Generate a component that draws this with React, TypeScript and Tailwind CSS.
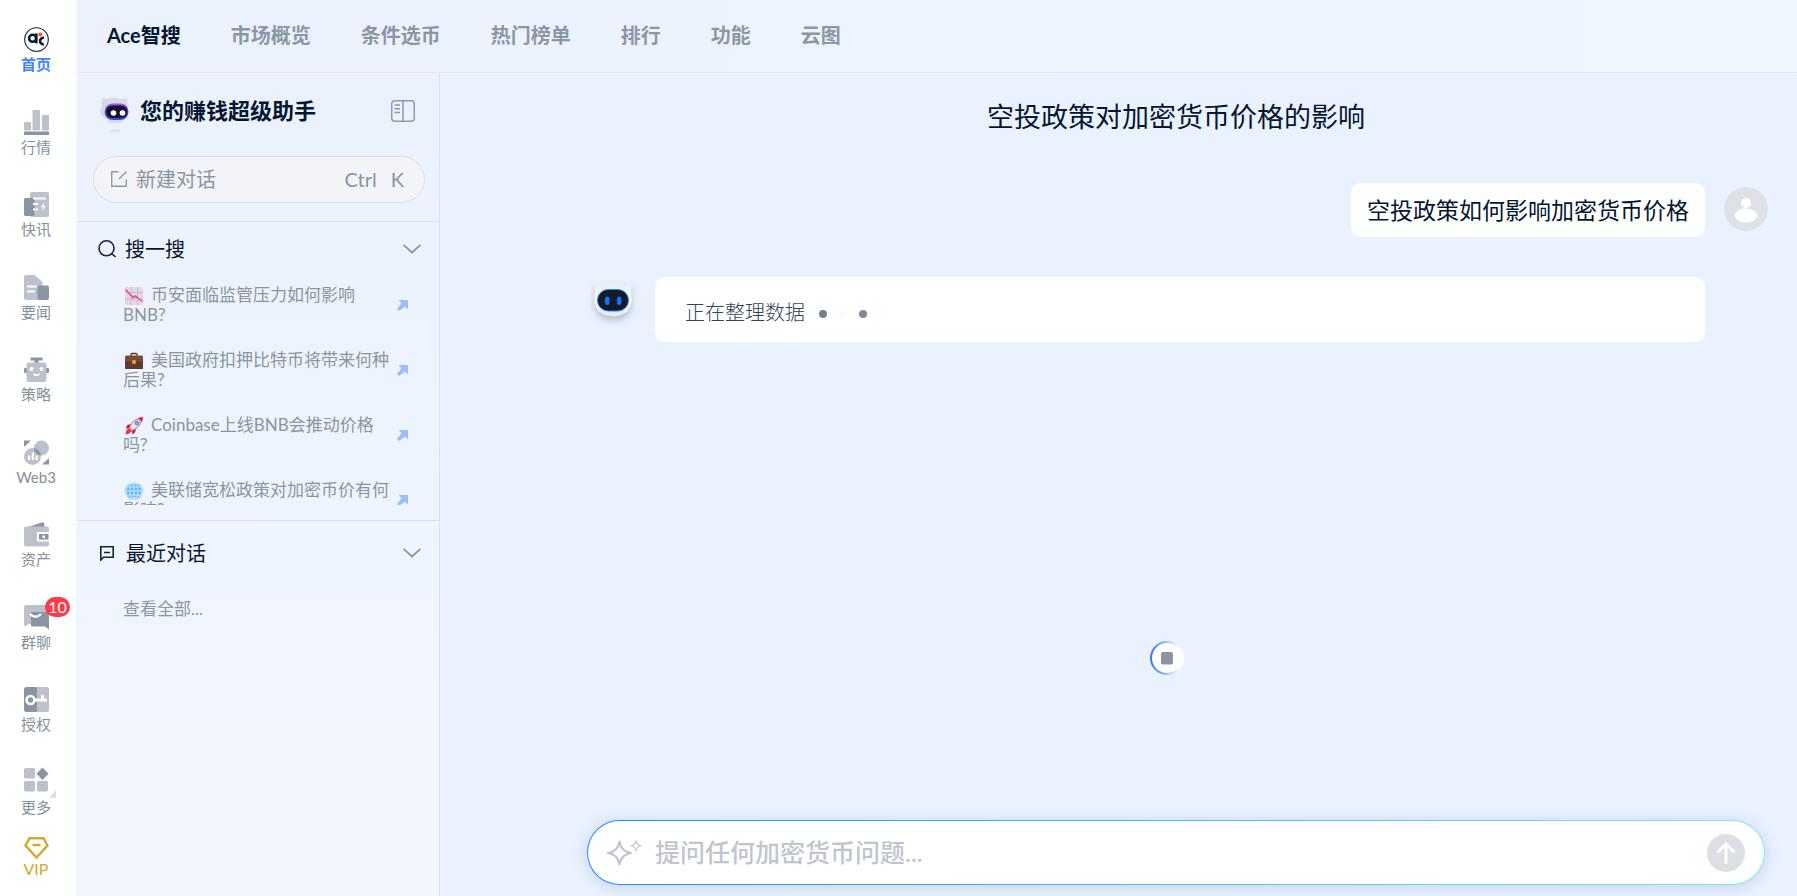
import React, { useState } from "react";

const LIGHT = "#bcc1cb";
const DARK = "#8a95a3";

const sideItems = [
  { label: "首页", icon: <LogoIcon />, active: true },
  {
    label: "行情",
    icon: (
      <SideSvg>
        <rect x="0" y="12" width="7" height="8.5" rx="1" fill={LIGHT} />
        <rect x="8.5" y="0" width="7.5" height="20.5" rx="1" fill={LIGHT} />
        <rect x="18" y="5" width="7" height="15.5" rx="1" fill={LIGHT} />
        <rect x="0" y="21.5" width="25" height="3.5" rx="0.5" fill={DARK} />
      </SideSvg>
    ),
  },
  {
    label: "快讯",
    icon: (
      <SideSvg>
        <rect x="6" y="0" width="19" height="25" rx="2" fill={LIGHT} />
        <rect x="0" y="6" width="10.5" height="18" rx="1.5" fill={DARK} />
        <path d="M9 6.5h13M9 12h5M9 17.5h5" stroke="#fff" strokeWidth="2" />
        <path d="M20.5 10.5L16.5 15.200h2.700L18 18.800l4-4.800h-2.700z" fill="#fff" />
      </SideSvg>
    ),
  },
  {
    label: "要闻",
    icon: (
      <SideSvg>
        <path d="M2 0h8.5L18.5 7v18H2a2 2 0 0 1-2-2V2a2 2 0 0 1 2-2z" fill={LIGHT} />
        <path d="M3 11.5h10M3 16.5h8" stroke="#fff" strokeWidth="2" />
        <rect x="13.5" y="10.5" width="11.5" height="14.5" rx="2" fill={DARK} />
      </SideSvg>
    ),
  },
  {
    label: "策略",
    icon: (
      <SideSvg>
        <path d="M6.5 0.5h12v3h-4V7h-4V3.5h-4z" fill={DARK} />
        <rect x="0" y="11" width="4" height="5" rx="1" fill={DARK} />
        <rect x="21" y="11" width="4" height="5" rx="1" fill={DARK} />
        <rect x="2.5" y="5.5" width="20" height="19.5" rx="2" fill={LIGHT} />
        <circle cx="7.5" cy="12" r="2" fill="#fff" />
        <circle cx="17.5" cy="12" r="2" fill="#fff" />
        <path d="M9.5 17q3 2.5 6 0" stroke="#fff" strokeWidth="1.8" fill="none" />
      </SideSvg>
    ),
  },
  {
    label: "Web3",
    icon: (
      <SideSvg>
        <path d="M0 0.5h7L0 7z" fill={DARK} />
        <path d="M25 18v6.5h-7z" fill={DARK} />
        <circle cx="17.5" cy="8" r="7.5" fill={LIGHT} />
        <circle cx="8.5" cy="16.5" r="8.5" fill={LIGHT} />
        <path d="M10 8.1a8.5 8.5 0 0 1 6.9 7.3A7.5 7.5 0 0 1 10 8.1z" fill={DARK} />
        <path d="M5 15.5V20M8.8 12.5V20M12.5 15.5V20" stroke="#fff" strokeWidth="2.2" />
      </SideSvg>
    ),
  },
  {
    label: "资产",
    icon: (
      <SideSvg>
        <path d="M4 5L19.5 0L21 5z" fill={DARK} />
        <rect x="0" y="4.5" width="25" height="20" rx="2" fill={LIGHT} />
        <rect x="13" y="10" width="12" height="9.5" fill="#fff" />
        <rect x="15" y="12" width="9.500" height="5.5" fill={DARK} />
        <rect x="18.5" y="13.5" width="2.5" height="2.5" fill="#fff" />
      </SideSvg>
    ),
  },
  {
    label: "群聊",
    badge: 10,
    icon: (
      <SideSvg>
        <path d="M2 0h21a2 2 0 0 1 2 2v17H5l-4 2.5L0 20V2a2 2 0 0 1 2-2z" fill={LIGHT} />
        <path d="M8 7h15.5L25 8v16.500l-4-3H8a1 1 0 0 1-1-1V8a1 1 0 0 1 1-1z" fill={DARK} />
        <path d="M6 9q5.5 5.500 11 0" stroke="#fff" strokeWidth="2.4" fill="none" />
      </SideSvg>
    ),
  },
  {
    label: "授权",
    icon: (
      <SideSvg>
        <path d="M2.5 0H13.5v25h-11A2.5 2.5 0 0 1 0 22.5v-20A2.5 2.5 0 0 1 2.5 0z" fill={DARK} />
        <path d="M13.5 0h9A2.5 2.5 0 0 1 25 2.5v20a2.5 2.5 0 0 1-2.5 2.5h-9z" fill={LIGHT} />
        <circle cx="6.5" cy="13" r="4" fill="none" stroke="#fff" strokeWidth="2.5" />
        <path d="M10.5 13H23M18.5 8v5" stroke="#fff" strokeWidth="2.8" />
      </SideSvg>
    ),
  },
  {
    label: "更多",
    more: true,
    icon: (
      <svg width="25" height="25" viewBox="0 2 25 25" overflow="visible" aria-hidden="true">
        <rect x="0" y="0" width="11" height="10.5" rx="1.5" fill={LIGHT} />
        <rect x="0" y="13" width="11" height="10.5" rx="1.5" fill={LIGHT} />
        <rect x="13" y="13" width="11" height="10.5" rx="1.5" fill={LIGHT} />
        <path d="M18.5 -0.5l6 6.200-6 6.200-6-6.200z" fill={DARK} />
      </svg>
    ),
  },
];

const topNav = ["Ace智搜", "市场概览", "条件选币", "热门榜单", "排行", "功能", "云图"];

const suggestions = [
  { icon: <ChartEmoji />, text: "币安面临监管压力如何影响BNB?" },
  { icon: <BriefcaseEmoji />, text: "美国政府扣押比特币将带来何种后果?" },
  { icon: <RocketEmoji />, text: "Coinbase上线BNB会推动价格吗?" },
  { icon: <GlobeEmoji />, text: "美联储宽松政策对加密币价有何影响?" },
];

function SideSvg({ children }: { children: React.ReactNode }) {
  return (
    <svg width="25" height="25" viewBox="0 0 25 25" aria-hidden="true">
      {children}
    </svg>
  );
}

function LogoIcon() {
  return (
    <SideSvg>
      <circle cx="12.5" cy="12.5" r="11.8" fill="#fff" stroke="#0f2440" strokeWidth="1.100" />
      <circle cx="8.600" cy="11.300" r="3.5" fill="none" stroke="#0a1b36" strokeWidth="2.6" />
      <rect x="11" y="6.5" width="2.600" height="9.800" fill="#0a1b36" />
      <path d="M20 10.800a3.500 3.500 0 0 0-4 3.300 3.300 3.300 0 0 0 3.800 3.200" fill="none" stroke="#0a1b36" strokeWidth="2.600" />
      <circle cx="16.300" cy="7.600" r="2" fill="#f4512c" />
    </SideSvg>
  );
}

function EmojiSvg({ children }: { children: React.ReactNode }) {
  return (
    <svg
      width="18"
      height="18"
      viewBox="0 0 18 18"
      className="ml-[2px] mr-2 inline-block align-[-4px]"
      aria-hidden="true"
    >
      {children}
    </svg>
  );
}

function ChartEmoji() {
  return (
    <EmojiSvg>
      <rect width="18" height="18" rx="2" fill="#e4d6ea" />
      <path d="M0 5.5h18M0 12h18M6 0v18M12.5 0v18" stroke="#c9b8d6" />
      <path d="M0.5 2.5l7.5 8 2.5-1.5L14 12l3.5 2.5" fill="none" stroke="#f0476c" strokeWidth="1.5" />
    </EmojiSvg>
  );
}

function BriefcaseEmoji() {
  return (
    <EmojiSvg>
      <path d="M6 4V2.5Q6 1.5 7 1.5h4q1 0 1 1V4" fill="none" stroke="#5a3a33" strokeWidth="1.3" />
      <rect x="0" y="3.5" width="18" height="13.5" rx="1.5" fill="#7a4a38" />
      <path d="M0 9.5h18V15.5a1.5 1.5 0 0 1-1.5 1.5h-15A1.5 1.5 0 0 1 0 15.5z" fill="#5f3a31" />
      <rect x="7.2" y="8" width="3.6" height="4" rx="1" fill="#f09a2a" />
    </EmojiSvg>
  );
}

function RocketEmoji() {
  return (
    <EmojiSvg>
      <path d="M6 7L2.5 8 0.5 11.5l4-.5zM11 12l-1 3.5L7 17.5l.3-4z" fill="#c2185b" />
      <path d="M4.5 10.5C6.5 5 10.5 1.5 16.5 1.5c0 6-4 10-9.5 12z" fill="#e9e3ee" stroke="#c64b78" strokeWidth="0.8" />
      <path d="M13 1.2Q15.5 0 18 0q0 2.5-1.2 5z" fill="#d81b50" />
      <circle cx="12" cy="6" r="2" fill="#5fb3e8" stroke="#6b7785" strokeWidth="0.7" />
      <path d="M4 11q-3 1-3.5 6.5Q5 17 7 14z" fill="#f5333f" />
    </EmojiSvg>
  );
}

function GlobeEmoji() {
  return (
    <EmojiSvg>
      <circle cx="9" cy="9" r="8.8" fill="#62b8fb" />
      <g fill="none" stroke="#d5eeff" strokeWidth="0.9">
        <circle cx="9" cy="9" r="8" />
        <ellipse cx="9" cy="9" rx="4" ry="8" />
        <path d="M9 1v16M1 9h16M2.3 5h13.4M2.3 13h13.4" />
      </g>
    </EmojiSvg>
  );
}

function HelperBot() {
  return (
    <svg width="29" height="36" viewBox="0 0 29 36" className="mt-2" aria-hidden="true">
      <defs>
        <linearGradient id="visor" x1="0" y1="0" x2="0" y2="1">
          <stop offset="0" stopColor="#b44be0" />
          <stop offset="1" stopColor="#2f4df5" />
        </linearGradient>
      </defs>
      <ellipse cx="15" cy="33.5" rx="5.5" ry="1.5" fill="#dde4ee" />
      <path d="M2 1l5 1q7-2.5 14 0l6-1 .5 8q2 7-1 10-4 4-12 4T2 19q-3-5-.5-10z" fill="#d6dce6" />
      <path d="M8 23h15l-1 3H9z" fill="#d8dce3" />
      <rect x="4.5" y="6.5" width="24" height="16.5" rx="8" fill="url(#visor)" />
      <rect x="6" y="8.5" width="21.5" height="12.5" rx="6.2" fill="#10152b" />
      <circle cx="13.5" cy="16" r="2.8" fill="#fff" />
      <circle cx="22.5" cy="16" r="2.8" fill="#fff" />
    </svg>
  );
}

function BotAvatar() {
  return (
    <svg width="40" height="46" viewBox="0 0 40 46" overflow="visible" className="shrink-0" aria-hidden="true">
      <defs>
        <linearGradient id="head" x1="0" y1="0" x2="0" y2="1">
          <stop offset="0" stopColor="#e6eff4" />
          <stop offset="0.5" stopColor="#f7fafd" />
          <stop offset="1" stopColor="#e2eaf4" />
        </linearGradient>
        <filter id="headShadow" x="-30%" y="-30%" width="160%" height="180%">
          <feDropShadow dx="0" dy="4" stdDeviation="3.5" floodColor="#7d8796" floodOpacity="0.5" />
        </filter>
      </defs>
      <path
        d="M2 1l6 1.5q12-3 24 0l6-1.500v10q1 9-.5 13-3 8-11.500 9.500l-6 1-6-1Q5.500 32 2.500 24q-2-5-.5-13z"
        fill="url(#head)"
        filter="url(#headShadow)"
      />
      <rect x="4.500" y="7.500" width="31" height="21.5" rx="10.7" fill="#151a28" stroke="#2b86f5" strokeWidth="1" />
      <rect x="12" y="14.500" width="4.5" height="8.5" rx="2.2" fill="#0c74ff" />
      <rect x="24" y="14.500" width="4.5" height="8.5" rx="2.2" fill="#0c74ff" />
    </svg>
  );
}

function Chevron() {
  return (
    <svg width="18" height="10" viewBox="0 0 18 10" fill="none" aria-hidden="true">
      <path d="M0.5 0.8L9 8.5l8.5-7.7" stroke="#8a93a3" strokeWidth="1.8" />
    </svg>
  );
}

function SideBar() {
  return (
    <nav className="flex w-[76px] shrink-0 flex-col bg-white pr-1">
      <ul className="flex flex-1 flex-col justify-between pt-[23px]">
        {sideItems.map((item) => (
          <li key={item.label}>
            <a href="#" className="relative flex flex-col items-center pt-1">
              {item.icon}
              <span
                className={`text-[15px] leading-6 ${
                  item.active ? "font-bold text-[#4286f5]" : "text-[#858f9b]"
                }`}
              >
                {item.label}
              </span>
              {item.badge && (
                <span className="absolute -top-1 left-[45px] h-5 w-[25px] rounded-full bg-[#fd3a46] text-center text-base leading-5 text-white">
                  {item.badge}
                </span>
              )}
              {item.more && (
                <svg width="7" height="8" viewBox="0 0 7 8" className="absolute right-4 top-6" aria-hidden="true">
                  <path d="M7 0v8H0z" fill="#dde0e6" />
                </svg>
              )}
            </a>
          </li>
        ))}
      </ul>
      <a href="#" className="flex h-[77px] flex-col items-center pt-[18px] text-[#d3a82c]">
        <svg width="25" height="22" viewBox="0 0 25 22" fill="none" stroke="currentColor" strokeWidth="2.4" aria-hidden="true">
          <path d="M5.5 1.2h14l4 7.3-11 12-11-12z" />
          <path d="M8.5 8h8" />
        </svg>
        <span className="text-base leading-5">VIP</span>
      </a>
    </nav>
  );
}

function TopNav() {
  return (
    <header className="flex h-[73px] shrink-0 items-center border-b border-[#e4e8ee] bg-linear-to-r from-[#ebf2fe] to-[#f0f6ff] pb-[2px] pl-[29px]">
      <ul className="flex gap-[50px] text-xl font-bold">
        {topNav.map((name, i) => (
          <li key={name}>
            <a href="#" className={i === 0 ? "text-[#031632]" : "text-[#8c97a5]"}>
              {name}
            </a>
          </li>
        ))}
      </ul>
    </header>
  );
}

function AssistantPanel() {
  const [searchOpen, setSearchOpen] = useState(true);
  const [recentOpen, setRecentOpen] = useState(true);

  return (
    <aside className="flex w-[362px] shrink-0 flex-col border-r border-[#dce1e9] bg-linear-to-b from-[#ebf2fe] to-[#f2f7ff]">
      <div className="border-b border-[#dce1e9] pb-[18px] pl-[15px] pr-[14px] pt-5">
        <div className="flex h-9 items-center pl-[7px] pr-[10px]">
          <HelperBot />
          <h1 className="ml-[11px] flex-1 text-[22px] font-bold leading-9 text-[#031632]">
            您的赚钱超级助手
          </h1>
          <button aria-label="收起侧栏">
            <svg width="24" height="22" viewBox="0 0 24 22" fill="none" stroke="#8f99a8" strokeWidth="1.5" aria-hidden="true">
              <rect x="0.7" y="0.7" width="22.6" height="20.6" rx="3" />
              <path d="M12 1v20M3.5 5h5.5M3.5 8.8h5.5M3.5 12.6h5.5" />
            </svg>
          </button>
        </div>
        <button className="mt-[27px] flex h-[47px] w-full items-center rounded-full border border-[#dadee4] bg-[#f2f4f8] pb-[2px] pl-[17px] pr-5 text-xl text-[#8a94a2]">
          <svg width="16" height="16" viewBox="0 0 16 16" fill="none" stroke="#8f99a8" strokeWidth="1.4" aria-hidden="true">
            <path d="M7.5 0.7H0.7v14.6h14.6V8.5M8 8l7.5-7.5" />
          </svg>
          <span className="ml-[9px] flex-1 text-left">新建对话</span>
          <kbd className="font-[inherit]">Ctrl</kbd>
          <kbd className="ml-[14px] font-[inherit]">K</kbd>
        </button>
      </div>

      <section className="border-b border-[#dce1e9] pb-[15px]">
        <button
          className="flex h-[54px] w-full items-center pl-[20px] pr-[18px] text-xl text-[#031632]"
          onClick={() => setSearchOpen(!searchOpen)}
        >
          <svg width="18" height="18" viewBox="0 0 18 18" fill="none" stroke="#0f2440" strokeWidth="1.6" aria-hidden="true">
            <circle cx="8.5" cy="8.3" r="7.5" />
            <path d="M13.5 13.5l4 3.5" />
          </svg>
          <span className="ml-[9px] flex-1 text-left">搜一搜</span>
          <Chevron />
        </button>
        {searchOpen && (
          <ul className="h-[229px] overflow-y-auto pl-[45px] pr-[31px] pt-[9px] [scrollbar-width:none]">
            {suggestions.map((s) => (
              <li key={s.text} className="mb-[25px]">
                <a href="#" className="flex h-10 items-center justify-between text-[17px] leading-5 text-[#8b95a2]">
                  <span className="w-[273px] shrink-0">
                    {s.icon}
                    {s.text}
                  </span>
                  <svg width="11" height="11" viewBox="0 0 11 11" className="shrink-0" aria-hidden="true">
                    <path d="M1.5 0H11v9.5L8 6.8 2 11 0 9l4.5-5.8z" fill="#98c0f7" />
                  </svg>
                </a>
              </li>
            ))}
          </ul>
        )}
      </section>

      <section>
        <button
          className="flex h-16 w-full items-center pl-[22px] pr-[18px] text-xl text-[#031632]"
          onClick={() => setRecentOpen(!recentOpen)}
        >
          <svg width="14" height="15" viewBox="0 0 14 15" fill="none" stroke="#0f2440" strokeWidth="1.6" aria-hidden="true">
            <path d="M0.8 14V0.8h12.4v10.4H3.5zM4 6.5h6" />
          </svg>
          <span className="ml-3 flex-1 text-left">最近对话</span>
          <Chevron />
        </button>
        {recentOpen && (
          <a href="#" className="ml-[45px] mt-3 block text-[17px] leading-6 text-[#8b95a2]">
            查看全部...
          </a>
        )}
      </section>
    </aside>
  );
}

function Chat() {
  const [question, setQuestion] = useState("");

  return (
    <main className="flex min-w-0 flex-1 flex-col bg-[#eaf2ff] pb-[11px] pl-[147px] pr-8">
      <h2 className="mt-6 text-center text-[27px] leading-10 text-[#031632]">
        空投政策对加密货币价格的影响
      </h2>

      <div className="-mr-[3px] mt-[46px] flex items-center justify-end gap-[19px]">
        <p className="rounded-[10px] bg-white px-4 text-[23px] leading-[54px] text-[#031632]">
          空投政策如何影响加密货币价格
        </p>
        <svg width="44" height="44" viewBox="0 0 44 44" className="mb-[2px] shrink-0" aria-hidden="true">
          <circle cx="22" cy="22" r="22" fill="#dee2e7" />
          <circle cx="22" cy="16" r="5" fill="#fff" />
          <ellipse cx="22" cy="28.5" rx="11.2" ry="7" fill="#fff" />
        </svg>
      </div>

      <div className="mr-[60px] mt-10 flex items-start pl-[6px]">
        <div className="mt-[5px]">
          <BotAvatar />
        </div>
        <div className="ml-[22px] flex h-[65px] flex-1 items-center rounded-[10px] bg-white pl-[30px] pt-1 text-xl font-light text-[#344256]">
          正在整理数据
          <span className="ml-[14px] mt-1 flex gap-3">
            <i className="h-2 w-2 rounded-full bg-[#748090]" />
            <i className="h-2 w-2 rounded-full bg-[#f9fafb]" />
            <i className="h-2 w-2 rounded-full bg-[#808b99]" />
          </span>
        </div>
      </div>

      <div className="mb-[145px] mt-auto flex justify-center pr-[18px]">
        <button aria-label="停止" className="h-[34px] w-[34px] rounded-full bg-white">
          <svg width="34" height="34" viewBox="0 0 34 34" aria-hidden="true">
            <defs>
              <linearGradient id="ring">
                <stop offset="0" stopColor="#2f7cf0" />
                <stop offset="0.9" stopColor="#fff" />
              </linearGradient>
            </defs>
            <circle cx="17" cy="17" r="16" fill="#fff" stroke="url(#ring)" strokeWidth="2" />
            <rect x="11" y="11" width="12" height="12.5" rx="2" fill="#8a95a3" />
          </svg>
        </button>
      </div>

      <form
        className="rounded-full bg-linear-to-r from-[#1a8cff] to-[#7fe9f8] p-px shadow-[0_2px_16px_rgba(90,110,150,0.24)]"
        onSubmit={(e) => e.preventDefault()}
      >
        <div className="flex h-[63px] items-center rounded-full bg-white pl-[19px] pr-[19px]">
          <svg width="35" height="26" viewBox="0 0 35 26" fill="none" stroke="#bfc5ce" strokeLinejoin="round" aria-hidden="true">
            <path d="M12.500 1.5q1.5 10 11.500 11.5-10 1.5-11.500 11.500-1.5-10-11.500-11.500Q11 11.500 12.500 1.5z" strokeWidth="2.100" />
            <path d="M29 0.800q.8 4.200 5 5-4.200.8-5 5-.8-4.200-5-5 4.200-.8 5-5z" strokeWidth="1.1" />
          </svg>
          <input
            className="ml-[13px] min-w-0 flex-1 bg-transparent pb-[2px] text-[25px] leading-9 text-[#031632] outline-none placeholder:font-medium placeholder:text-[#bfc5ce]"
            aria-label="提问"
            placeholder="提问任何加密货币问题..."
            value={question}
            onChange={(e) => setQuestion(e.target.value)}
          />
          <button aria-label="发送" className="flex h-[38px] w-[38px] items-center justify-center rounded-full bg-[#dce0e5]">
            <svg width="18" height="22" viewBox="0 0 18 22" fill="none" stroke="#fff" strokeWidth="2.8" strokeLinecap="round" strokeLinejoin="round" aria-hidden="true">
              <path d="M9 20.5V2M1.5 9.5L9 1.8l7.5 7.7" />
            </svg>
          </button>
        </div>
      </form>
    </main>
  );
}

export default function App() {
  return (
    <div className="flex h-screen bg-[#eff5ff] font-['Lato','Noto_Sans_CJK_SC',sans-serif]">
      <SideBar />
      <div className="ml-[2px] flex min-w-0 flex-1 flex-col">
        <TopNav />
        <div className="flex min-h-0 flex-1">
          <AssistantPanel />
          <Chat />
        </div>
      </div>
    </div>
  );
}
